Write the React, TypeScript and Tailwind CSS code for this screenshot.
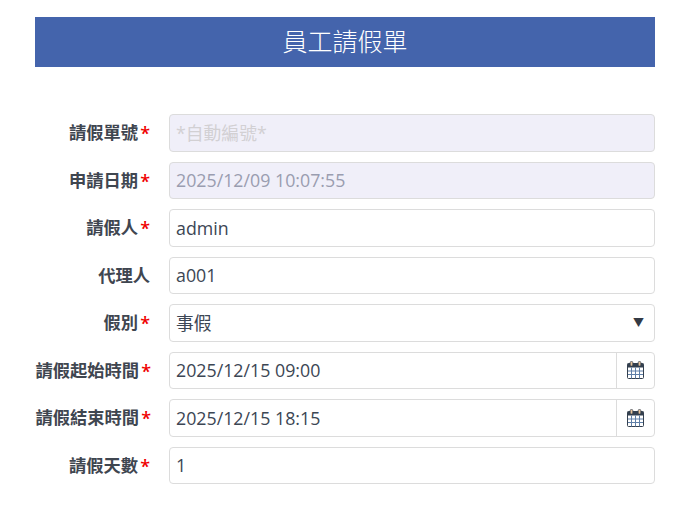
const FONT = "font-['Open_Sans','Noto_Sans_CJK_TC',sans-serif]";

type Field = {
  label: string;
  value: string;
  required?: boolean;
  kind?: 'text' | 'readonly' | 'placeholder' | 'select' | 'date';
};

const FIELDS: Field[] = [
  { label: '請假單號', value: '*自動編號*', required: true, kind: 'placeholder' },
  { label: '申請日期', value: '2025/12/09 10:07:55', required: true, kind: 'readonly' },
  { label: '請假人', value: 'admin', required: true },
  { label: '代理人', value: 'a001' },
  { label: '假別', value: '事假', required: true, kind: 'select' },
  { label: '請假起始時間', value: '2025/12/15 09:00', required: true, kind: 'date' },
  { label: '請假結束時間', value: '2025/12/15 18:15', required: true, kind: 'date' },
  { label: '請假天數', value: '1', required: true },
];

function CalendarIcon() {
  return (
    <svg width="17" height="18" viewBox="0 0 17 18" aria-hidden="true">
      <rect x="0.5" y="2.5" width="16" height="15" rx="1" fill="#fff" stroke="#34404f" />
      <rect x="0.5" y="2.5" width="16" height="4" fill="#34404f" />
      <path
        d="M4.5 6.5v11M8.5 6.5v11M12.5 6.5v11M1 10h15M1 13.5h15"
        stroke="#5f7fa8"
        strokeWidth="1"
        fill="none"
      />
      <rect x="3.2" y="0.5" width="2.6" height="4.5" rx="1" fill="#e8c49c" stroke="#34404f" strokeWidth="0.7" />
      <rect x="11.2" y="0.5" width="2.6" height="4.5" rx="1" fill="#e8c49c" stroke="#34404f" strokeWidth="0.7" />
    </svg>
  );
}

function FieldRow({ field }: { field: Field }) {
  const kind = field.kind ?? 'text';
  const isLocked = kind === 'readonly' || kind === 'placeholder';
  const isDate = kind === 'date';

  return (
    <div className="flex h-[37.5px] items-center">
      <label
        className={`flex shrink-0 items-center justify-end whitespace-nowrap pt-[1px] text-[17.3px] font-semibold text-[#3f4650] ${isDate ? 'w-[116px]' : 'w-[115px]'}`}
      >
        {field.label}
        {field.required && <span className="ml-[2px] text-[18px] leading-none text-[#f00000]">*</span>}
      </label>
      <div
        className={`flex h-full min-w-0 flex-1 items-center overflow-hidden rounded-[4px] border border-[#dcdcdc] text-[17.8px] ${isDate ? 'ml-[18px]' : 'ml-[19px]'} ${isLocked ? 'bg-[#f0eff9]' : 'bg-white'}`}
      >
        <span
          className={`min-w-0 flex-1 pl-[6px] pt-[1px] ${
            kind === 'placeholder'
              ? 'text-[#d2d0d3]'
              : kind === 'readonly'
                ? 'text-[#9a9db0]'
                : 'text-[#3c4654]'
          }`}
        >
          {field.value}
        </span>
        {kind === 'select' && <span className="mr-[10px] text-[11px] leading-none text-[#333a45]">▼</span>}
        {isDate && (
          <span className="flex h-full w-[38px] items-center justify-center border-l border-[#dcdcdc]">
            <CalendarIcon />
          </span>
        )}
      </div>
    </div>
  );
}

export default function App() {
  return (
    <div className={`min-h-[511px] w-[692px] bg-white px-[35px] pt-[17px] ${FONT}`}>
      <div className="flex h-[50px] w-[620px] items-center justify-center bg-[#4464ac] pb-[1px] text-[25px] font-light text-white">
        員工請假單
      </div>
      <form className="mt-[47px] flex w-[620px] flex-col gap-[10px]">
        {FIELDS.map((field) => (
          <FieldRow key={field.label} field={field} />
        ))}
      </form>
    </div>
  );
}
